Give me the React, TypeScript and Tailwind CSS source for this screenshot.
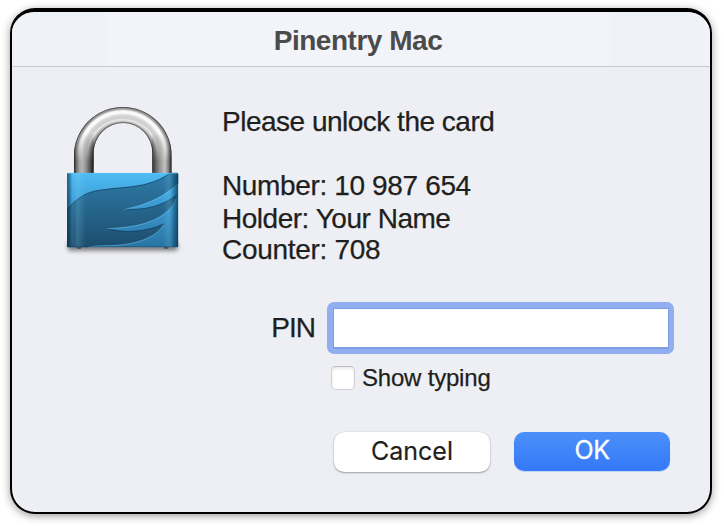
function PadlockIcon() {
  return (
    <svg className="block" width="145" height="170" viewBox="0 0 435 510" aria-hidden="true">
      <defs>
        <linearGradient id="body" x1="0" y1="233" x2="0" y2="457" gradientUnits="userSpaceOnUse">
          <stop offset="0" stopColor="#4ebcf4" />
          <stop offset="0.4" stopColor="#3c9cd4" />
          <stop offset="1" stopColor="#2874a2" />
        </linearGradient>
        <linearGradient id="wing" x1="0" y1="233" x2="0" y2="457" gradientUnits="userSpaceOnUse">
          <stop offset="0" stopColor="#2e7ca8" />
          <stop offset="0.5" stopColor="#25658c" />
          <stop offset="1" stopColor="#1d4c6c" />
        </linearGradient>
        <linearGradient id="sides" x1="51" y1="0" x2="385" y2="0" gradientUnits="userSpaceOnUse">
          <stop offset="0" stopColor="#06283e" stopOpacity="0.65" />
          <stop offset="0.03" stopColor="#0a4265" stopOpacity="0.4" />
          <stop offset="0.06" stopColor="#8fdcff" stopOpacity="0.05" />
          <stop offset="0.095" stopColor="#8fdcff" stopOpacity="0.2" />
          <stop offset="0.17" stopColor="#8fdcff" stopOpacity="0" />
          <stop offset="0.86" stopColor="#8fdcff" stopOpacity="0" />
          <stop offset="0.91" stopColor="#8fdcff" stopOpacity="0.14" />
          <stop offset="0.955" stopColor="#0a4265" stopOpacity="0.35" />
          <stop offset="1" stopColor="#06283e" stopOpacity="0.75" />
        </linearGradient>
        <radialGradient id="steel" cx="218" cy="180" r="146" gradientUnits="userSpaceOnUse">
          <stop offset="0.6" stopColor="#555" />
          <stop offset="0.64" stopColor="#858585" />
          <stop offset="0.68" stopColor="#b5b5b5" />
          <stop offset="0.72" stopColor="#eaeaea" />
          <stop offset="0.76" stopColor="#cfcfcf" />
          <stop offset="0.81" stopColor="#d4d4d4" />
          <stop offset="0.87" stopColor="#fff" />
          <stop offset="0.91" stopColor="#f4f4f4" />
          <stop offset="0.94" stopColor="#aaa" />
          <stop offset="0.975" stopColor="#808080" />
          <stop offset="1" stopColor="#444" />
        </radialGradient>
        <linearGradient id="legL" x1="72" y1="0" x2="131" y2="0" gradientUnits="userSpaceOnUse">
          <stop offset="0" stopColor="#222" />
          <stop offset="0.12" stopColor="#6c6c6c" />
          <stop offset="0.28" stopColor="#a5a5a5" />
          <stop offset="0.42" stopColor="#b5b5b5" />
          <stop offset="0.62" stopColor="#8e8e8e" />
          <stop offset="0.84" stopColor="#4c4c4c" />
          <stop offset="1" stopColor="#111" />
        </linearGradient>
        <linearGradient id="legR" x1="305" y1="0" x2="365" y2="0" gradientUnits="userSpaceOnUse">
          <stop offset="0" stopColor="#222" />
          <stop offset="0.14" stopColor="#505050" />
          <stop offset="0.38" stopColor="#8e8e8e" />
          <stop offset="0.66" stopColor="#c2c2c2" />
          <stop offset="0.82" stopColor="#888" />
          <stop offset="1" stopColor="#181818" />
        </linearGradient>
        <linearGradient id="legFade" x1="0" y1="115" x2="0" y2="200" gradientUnits="userSpaceOnUse">
          <stop offset="0" stopColor="#fff" stopOpacity="0" />
          <stop offset="1" stopColor="#fff" />
        </linearGradient>
        <mask id="legMask" maskUnits="userSpaceOnUse" x="60" y="30" width="320" height="210">
          <rect x="60" y="30" width="320" height="210" fill="url(#legFade)" />
        </mask>
        <clipPath id="shackle">
          <path d="M72 236V182A146.5 146 0 0 1 365 182V236H307V174A88 90 0 0 0 131 174V236Z" />
        </clipPath>
        <clipPath id="case">
          <rect x="51" y="233" width="334" height="224" rx="4" />
        </clipPath>
        <filter id="shadowBlur" x="-20%" y="-200%" width="140%" height="500%">
          <feGaussianBlur stdDeviation="7" />
        </filter>
      </defs>
      <rect x="53" y="440" width="330" height="27" rx="8" fill="#222" opacity="0.55" filter="url(#shadowBlur)" />
      <path d="M79 455h16l-3 6h-10zM341 455h16l-3 6h-10z" fill="#454c52" />
      <g clipPath="url(#shackle)">
        <rect x="70" y="34" width="297" height="204" fill="url(#steel)" />
        <g mask="url(#legMask)">
          <rect x="72" y="100" width="59" height="138" fill="url(#legL)" />
          <rect x="305" y="100" width="60" height="138" fill="url(#legR)" />
        </g>
        <path d="M72 236V182A146.5 146 0 0 1 365 182V236M307 236V174A88 90 0 0 0 131 174V236" fill="none" stroke="#333" strokeWidth="4" opacity="0.65" />
      </g>
      <g clipPath="url(#case)">
        <rect x="51" y="233" width="334" height="224" fill="url(#body)" />
        <path
          d="M49 346C76 314 103 296 132 289C190 277 250 280 300 264C332 254 350 242 366 230H390V261C352 294 302 329 220 342C286 348 337 332 381 300C365 362 291 397 169 399C223 418 293 409 341 387C320 427 254 448 187 450C158 451 136 450 116 455L112 460H49Z"
          fill="url(#wing)"
        />
        <path
          d="M49 346C76 314 103 296 132 289C190 277 250 280 300 264C332 254 350 242 366 230M220 342C286 348 337 332 381 300M169 399C223 418 293 409 341 387"
          fill="none" stroke="#123f60" strokeWidth="3" opacity="0.8"
        />
        <path
          d="M390 262C352 295 302 331 220 344M381 302C365 364 291 399 169 401M341 389C320 429 254 450 187 452C158 453 136 452 116 457"
          fill="none" stroke="#8ccbef" strokeWidth="2" opacity="0.55"
        />
        <rect x="51" y="233" width="334" height="224" fill="url(#sides)" />
        <path d="M51 235H385" stroke="#67cbff" strokeWidth="3" opacity="0.55" />
        <path d="M51 456H385" stroke="#0b3b5a" strokeWidth="3" opacity="0.55" />
      </g>
    </svg>
  );
}

export default function App() {
  return (
    <main className="h-[526px] w-[724px] overflow-hidden bg-white px-[10px] pt-2 font-['Liberation_Sans',Arial,sans-serif] text-[#1f1f20]">
      <section className="flex h-[506px] w-[702px] flex-col overflow-hidden rounded-[25px] border-2 border-t-4 border-black bg-[#eeeff4] shadow-[0_2px_9px_rgba(0,0,0,0.38)]">
        <header className="flex h-[55px] shrink-0 items-center justify-center border-b border-[#c9c9ce] bg-[linear-gradient(90deg,#eff3f7_0_96px,#f3f4f9_96px_598px,#eff3f7_598px)] pr-[6px]">
          <h1 className="pt-[3px] text-[28px] leading-8 font-bold tracking-[-0.48px] whitespace-nowrap text-[#4b4b4b]">Pinentry Mac</h1>
        </header>
        <div className="flex h-[235px] shrink-0 pt-7 pl-[38px]">
          <PadlockIcon />
          <div className="pt-[11px] pl-[27px] text-[28px] leading-8 whitespace-nowrap [-webkit-text-stroke:0.25px_#1f1f20]">
            <p className="tracking-[-0.5px]">Please unlock the card</p>
            <p className="mt-8 tracking-[-0.36px]">Number: 10 987 654</p>
            <p className="h-[32px] pt-px tracking-[-0.48px]">Holder: Your Name</p>
            <p className="tracking-[-0.3px]">Counter: 708</p>
          </div>
        </div>
        <form className="flex flex-col pr-9" onSubmit={(e) => e.preventDefault()}>
          <label className="flex h-[52px] items-center justify-end">
            <span className="mr-[12px] text-[28px] leading-8 tracking-[-1px] [-webkit-text-stroke:0.25px_#1f1f20]">PIN</span>
            <span className="flex h-[52px] w-[347px] items-center justify-center rounded-[7px] bg-[#91aef1]">
              <input className="h-[41px] w-[336px] border border-b-2 border-[#7e9fe5] bg-white px-2 text-[27px] outline-none" type="password" aria-label="PIN" />
            </span>
          </label>
          <label className="mt-[12px] ml-[319px] flex h-6 items-center">
            <span className="h-6 w-6 rounded-[5px] border border-[#cfcfd2] border-t-[#bebec1] bg-white shadow-[inset_0_2px_3px_rgba(0,0,0,0.08)]" />
            <span className="ml-[7px] text-[24px] tracking-[-0.2px] [-webkit-text-stroke:0.25px_#1f1f20]">Show typing</span>
          </label>
          <div className="mt-[42px] ml-[322px] flex gap-6 font-['Inter',sans-serif] text-[25px]">
            <button type="button" className="flex h-10 w-[156px] items-center justify-center rounded-[10px] bg-white shadow-[0_1px_2px_rgba(0,0,0,0.32),0_0_1px_rgba(0,0,0,0.25)] [-webkit-text-stroke:0.2px_#1f1f20]">Cancel</button>
            <button type="submit" className="flex h-[39px] w-[156px] items-center justify-center rounded-[10px] bg-linear-to-b from-[#4b90f8] to-[#3478f7] pb-[2px] tracking-[-0.5px] text-white shadow-[0_1px_1px_rgba(52,120,247,0.25)] [-webkit-text-stroke:0.3px_white]">OK</button>
          </div>
        </form>
      </section>
    </main>
  );
}
